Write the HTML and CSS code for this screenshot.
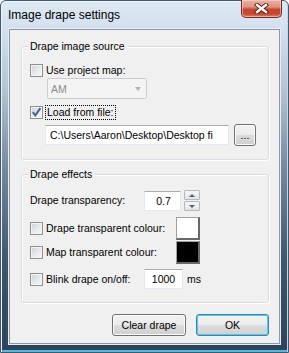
FILE: index.html
```html
<!DOCTYPE html>
<html lang="en">
<head>
    <meta charset="UTF-8">
    <meta name="viewport" content="width=device-width, initial-scale=1.0">
    <title>Image drape settings</title>
    <link rel="stylesheet" href="styles.css">
</head>
<body>
    <main class="window">
    <div class="titlebar">
        <span class="title">Image drape settings</span>
        <button class="close" aria-label="Close">
            <svg width="15" height="11" viewBox="0 0 15 11">
                <path d="M3 2 L12 9 M12 2 L3 9" stroke="#4b1f18" stroke-width="4.2" stroke-linecap="square"/>
                <path d="M3 2 L12 9 M12 2 L3 9" stroke="#ffffff" stroke-width="2.4" stroke-linecap="square"/>
            </svg>
        </button>
    </div>
    <div class="client">
        <div class="group group-source">
            <div class="group-title">Drape image source</div>
            <div class="check-row row-map">
                <span class="check"></span>
                <span class="label">Use project map:</span>
            </div>
            <div class="combo">
                <span>AM</span>
                <span class="arrow"></span>
            </div>
            <div class="check-row row-file">
                <span class="check">
                    <svg width="11" height="11" viewBox="0 0 11 11">
                        <path d="M1.8 5.2 L4.3 8.3 L9.4 1.2" fill="none" stroke="#4a5f97" stroke-width="2"/>
                    </svg>
                </span>
                <span class="label focus">Load from file:</span>
            </div>
            <div class="file-row">
                <div class="textbox path">C:\Users\Aaron\Desktop\Desktop fi</div>
                <button class="btn browse">...</button>
            </div>
        </div>

        <div class="group group-effects">
            <div class="group-title">Drape effects</div>
            <div class="row row-transp">
                <span class="label col-label">Drape transparency:</span>
                <div class="textbox num">0.7</div>
                <div class="spin">
                    <span class="spin-btn"><span class="tri up"></span></span>
                    <span class="spin-btn"><span class="tri down"></span></span>
                </div>
            </div>
            <div class="row row-colour">
                <div class="check-row col-label wide">
                    <span class="check"></span>
                    <span class="label">Drape transparent colour:</span>
                </div>
                <span class="swatch white"></span>
            </div>
            <div class="row row-map-colour">
                <div class="check-row col-label wide">
                    <span class="check"></span>
                    <span class="label">Map transparent colour:</span>
                </div>
                <span class="swatch black"></span>
            </div>
            <div class="row row-blink">
                <div class="check-row col-label">
                    <span class="check"></span>
                    <span class="label">Blink drape on/off:</span>
                </div>
                <div class="textbox ms-box">1000</div>
                <span class="label unit">ms</span>
            </div>
        </div>

        <div class="buttons">
            <button class="btn clear">Clear drape</button>
            <button class="btn ok">OK</button>
        </div>
    </div>
    </main>
</body>
</html>
```

FILE: styles.css
```css
body{
    margin: 0;
    padding: 0;
    background: #ffffff;
}
.window{
    width: 289px;
    height: 353px;
    box-sizing: border-box;
    padding: 0 8px 8px 8px;
    border: 1px solid #44586c;
    border-radius: 6px 6px 0 0;
    background: linear-gradient(180deg, #dde8f3 0, #d2e0ee 30px, #b3c3d3 90px, #72879b 170px, #3e566e 260px, #2c435a 353px);
    box-shadow: inset 1px 1px 0 #eef4fa, inset -1px 0 0 #c9d5e1, inset 0 -2px 0 #4cbde2;
    display: flex;
    flex-direction: column;
    font-family: "Liberation Sans", Arial, sans-serif;
    font-size: 10.5px;
    color: #000;
}
.titlebar{
    height: 28px;
    display: flex;
    justify-content: space-between;
    align-items: flex-start;
}
.title{
    font-size: 12px;
    line-height: 14px;
    margin-top: 7px;
    margin-left: -1px;
    color: #000;
}
.close{
    width: 41px;
    height: 18px;
    margin-top: -1px;
    margin-right: -2px;
    padding: 0;
    border: 1px solid #6c2c22;
    border-top: none;
    border-radius: 0 0 5px 5px;
    background: linear-gradient(180deg, #eab1a2 0, #df9482 40%, #c8452f 55%, #c9452f 80%, #dd7a5c 100%);
    box-shadow: inset 0 0 0 1px rgba(255, 220, 210, 0.55);
    display: flex;
    justify-content: center;
    align-items: center;
}
.client{
    flex: 1;
    background: #f0f0f0;
    border: 1px solid #8a9aab;
    box-shadow: 0 0 0 1px #e6edf4;
    padding: 0 10px 0 11px;
    display: flex;
    flex-direction: column;
}
.group{
    border: 1px solid #d5dfe5;
    border-radius: 3px;
    box-shadow: 1px 1px 0 #ffffff, inset 1px 1px 0 #ffffff;
    padding: 0 8px;
    display: flex;
    flex-direction: column;
}
.group-source{
    margin-top: 16px;
    padding-bottom: 14px;
}
.group-effects{
    margin-top: 14px;
    padding-bottom: 13px;
}
.group-title{
    align-self: flex-start;
    margin: -7px 0 0 -2px;
    padding: 0 2px;
    line-height: 13px;
    height: 13px;
    background: #f0f0f0;
}
.label{
    line-height: 13px;
    white-space: nowrap;
}
.check-row{
    display: flex;
    align-items: center;
    height: 15px;
}
.check{
    width: 13px;
    height: 13px;
    box-sizing: border-box;
    border: 1px solid #8e8f8f;
    background: linear-gradient(135deg, #cdd1d6 0, #e6e8ea 50%, #f8f8f8 100%);
    box-shadow: inset 0 0 0 1px #f4f4f4;
    margin-right: 3px;
    flex: none;
    display: flex;
    justify-content: center;
    align-items: center;
}
.row-map{
    margin-top: 10px;
}
.combo{
    width: 100px;
    height: 21px;
    box-sizing: border-box;
    margin-left: 17px;
    border: 1px solid #c9cdd1;
    border-radius: 2px;
    background: #f4f4f4;
    color: #8d8d8d;
    display: flex;
    align-items: center;
    justify-content: space-between;
    padding: 0 5px 0 3px;
}
.arrow{
    width: 0;
    height: 0;
    border-left: 3.5px solid transparent;
    border-right: 3.5px solid transparent;
    border-top: 4px solid #b3b3b3;
}
.row-file{
    margin-top: 6px;
}
.focus{
    outline: 1px dotted #000;
    outline-offset: 0;
    padding: 0 1px;
    margin-left: 0;
}
.file-row{
    margin-top: 4px;
    margin-left: 15px;
    display: flex;
    align-items: center;
    height: 21px;
}
.textbox{
    height: 20px;
    box-sizing: border-box;
    background: #ffffff;
    border: 1px solid #e3e9ef;
    border-top-color: #abadb3;
    line-height: 18px;
    white-space: nowrap;
    overflow: hidden;
}
.path{
    width: 184px;
    padding-left: 4px;
}
.btn{
    font-family: "Liberation Sans", Arial, sans-serif;
    font-size: 10.5px;
    color: #000;
    padding: 0;
    border: 1px solid #707070;
    border-radius: 3px;
    background: linear-gradient(180deg, #f2f2f2 0, #ebebeb 50%, #dddddd 50%, #cfcfcf 100%);
    box-shadow: inset 0 0 0 1px #fcfcfc;
}
.browse{
    width: 22px;
    height: 22px;
    margin-left: 5px;
    line-height: 14px;
}
.row{
    display: flex;
    align-items: center;
}
.col-label{
    width: 114px;
    flex: none;
}
.wide{
    width: 146px;
}
.row-transp{
    margin-top: 9px;
    height: 21px;
}
.num{
    width: 37px;
    text-align: center;
    padding-left: 2px;
}
.spin{
    margin-left: 3px;
    display: flex;
    flex-direction: column;
    gap: 1px;
}
.spin-btn{
    width: 16px;
    height: 10px;
    box-sizing: border-box;
    border: 1px solid #b4b9be;
    border-radius: 1px;
    background: linear-gradient(180deg, #f6f6f6, #e4e4e4);
    display: flex;
    justify-content: center;
    align-items: center;
}
.tri{
    width: 0;
    height: 0;
    border-left: 3px solid transparent;
    border-right: 3px solid transparent;
}
.tri.up{
    border-bottom: 3px solid #4d6185;
}
.tri.down{
    border-top: 3px solid #4d6185;
}
.row-colour{
    margin-top: 6px;
    height: 23px;
}
.row-map-colour{
    margin-top: 1px;
    height: 23px;
}
.swatch{
    width: 24px;
    height: 23px;
    box-sizing: border-box;
    border: 1px solid #a0a0a0;
    border-right: 2px solid #696969;
    border-bottom: 2px solid #696969;
}
.swatch.white{
    background: #ffffff;
}
.swatch.black{
    background: #000000;
}
.row-blink{
    margin-top: 5px;
    height: 20px;
}
.ms-box{
    width: 39px;
    text-align: center;
}
.unit{
    margin-left: 4px;
}
.buttons{
    margin-top: 11px;
    display: flex;
    justify-content: flex-end;
    gap: 10px;
}
.clear{
    width: 74px;
    height: 22px;
}
.ok{
    width: 73px;
    height: 22px;
    border-color: #3c7fb1;
    box-shadow: inset 0 0 0 1px #48d0f7;
}
```
